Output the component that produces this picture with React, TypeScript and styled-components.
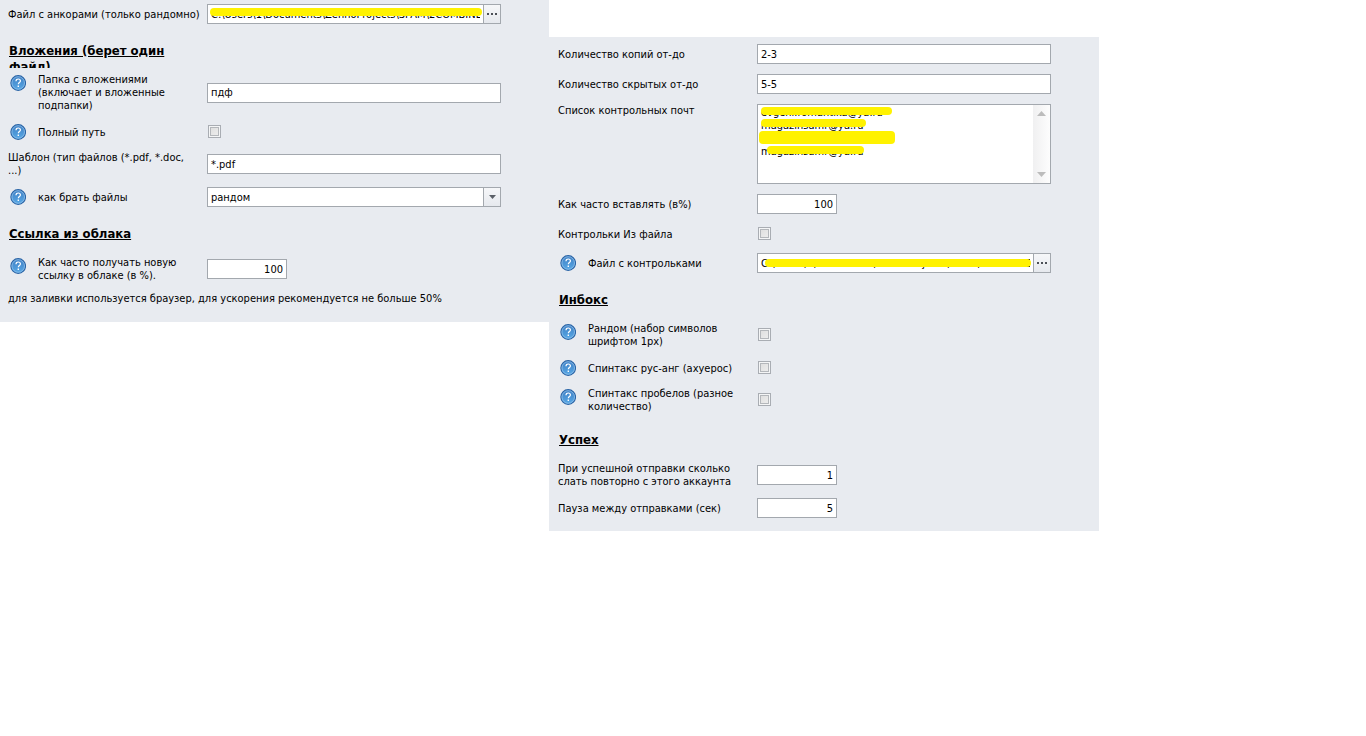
import React, { useId } from 'react';
import styled, { createGlobalStyle } from 'styled-components';

const font = '"DejaVu Sans Condensed", "Noto Sans", sans-serif';
const edge = '#a3a8ae';

const GlobalStyle = createGlobalStyle`
  *, *::before, *::after { box-sizing: border-box; }
  body { margin: 0; background: #fff; color: #000; font: 11px/13px ${font}; }
  input, select, textarea, button { font: inherit; color: inherit; margin: 0; }
`;

const Page = styled.main`
  display: grid;
  grid-template-columns: 549fr 550fr 267fr;
  align-items: start;
`;

const Panel = styled.section<{ $lead: number; $inset: number; $end: number; $drop?: number }>`
  background: #e8ebf0;
  margin-top: ${(p) => p.$drop ?? 0}px;
  padding: ${(p) => p.$lead}px 48px ${(p) => p.$end}px ${(p) => p.$inset}px;
  min-width: 0;
`;

const Heading = styled.h2`
  margin: 19px 0 5px;
  padding-left: 1px;
  height: 25px;
  overflow: hidden;
  font-size: 13px;
  line-height: 16px;
  font-weight: bold;
  text-decoration: underline;
  white-space: pre-line;
`;

const RowGrid = styled.div<{ $gap: number }>`
  display: grid;
  grid-template-columns: 199px minmax(0, 294px);
  align-items: center;
  min-height: 20px;
  margin-top: ${(p) => p.$gap}px;
`;

const LabelCell = styled.div<{ $top?: boolean }>`
  display: flex;
  align-self: ${(p) => (p.$top ? 'start' : 'stretch')};
  align-items: center;
  white-space: pre-line;
`;

const HelpButton = styled.button`
  align-self: flex-start;
  flex: none;
  width: 16px;
  height: 16px;
  margin: 2px 12px 0 2px;
  padding: 0;
  border: 0;
  background: none;
  svg { display: block; }
`;

const Note = styled.p`
  margin: 10px 0 0;
`;

const TextBox = styled.input`
  display: block;
  width: 100%;
  height: 20px;
  padding: 0 3px;
  border: 1px solid ${edge};
  border-radius: 0;
  background: #fff;
  outline: 0;
`;

const NumberBox = styled(TextBox)`
  width: 80px;
  text-align: right;
`;

const Check = styled.input`
  appearance: none;
  display: block;
  width: 13px;
  height: 13px;
  margin: 0 0 1px 1px;
  border: 1px solid #a9adb3;
  background: linear-gradient(135deg, #dcdcdc, #f0f0f0);
  box-shadow: inset 0 0 0 1px #f4f5f6, inset 0 0 0 2px #b4b7bb;
  &:checked { background: #4a6f9c; }
`;

const Frame = styled.div`
  position: relative;
  display: flex;
  border: 1px solid ${edge};
  background: #fff;
`;

const FrameInput = styled.input`
  flex: 1;
  min-width: 0;
  height: 18px;
  padding: 0 3px;
  border: 0;
  background: none;
  outline: 0;
`;

const SideButton = styled.button`
  display: flex;
  align-items: center;
  justify-content: center;
  width: 17px;
  height: 18px;
  padding: 0;
  border: 0;
  border-left: 1px solid ${edge};
  background: linear-gradient(#f6f7f9, #e6e9ee);
`;

const Picker = styled.select`
  appearance: none;
  flex: 1;
  min-width: 0;
  height: 18px;
  padding: 0 20px 0 3px;
  border: 0;
  border-radius: 0;
  background: none;
  outline: 0;
`;

const PickerArrow = styled.span`
  position: absolute;
  inset: 0 0 0 auto;
  display: flex;
  align-items: center;
  justify-content: center;
  width: 17px;
  border-left: 1px solid ${edge};
  background: linear-gradient(#f6f7f9, #e6e9ee);
  pointer-events: none;
`;

const Area = styled.textarea`
  flex: 1;
  min-width: 0;
  height: 78px;
  padding: 1px 3px;
  border: 0;
  background: none;
  outline: 0;
  overflow: hidden;
  resize: none;
  white-space: pre;
`;

const Rail = styled.div`
  display: flex;
  flex-direction: column;
  align-items: center;
  justify-content: space-between;
  width: 17px;
  padding: 6px 0;
  background: linear-gradient(90deg, #f0f0f1, #fdfdfd);
  svg { display: block; }
`;

const Marker = styled.span<{ $x: number; $y: number; $w?: number; $right?: number; $h?: number }>`
  position: absolute;
  left: ${(p) => p.$x}px;
  top: ${(p) => p.$y}px;
  height: ${(p) => p.$h ?? 8}px;
  ${(p) => (p.$right === undefined ? `width: ${p.$w}px;` : `right: ${p.$right}px;`)}
  border-radius: 4px;
  background: #fff200;
  pointer-events: none;
`;

function HelpIcon() {
  return (
    <svg width="16" height="16" viewBox="0 0 16 16" aria-hidden="true">
      <defs>
        <linearGradient id="help-fill" x1="0" y1="0" x2="0" y2="1">
          <stop offset="0" stopColor="#3f7fc4" />
          <stop offset="1" stopColor="#58a9e6" />
        </linearGradient>
      </defs>
      <circle cx="8.200" cy="8" r="7.300" fill="url(#help-fill)" stroke="#2a64a6" strokeWidth="1.200" />
      <circle cx="8.200" cy="8" r="6.300" fill="none" stroke="#9cc8ee" strokeWidth="0.700" />
      <path d="M6 6.200C6 4.700 6.900 4 8.200 4s2.200.8 2.200 1.900c0 1.600-2.100 1.700-2.100 3.400" fill="none" stroke="#fff" strokeWidth="1.200" />
      <rect x="7.600" y="10.500" width="1.400" height="1.500" fill="#fff" />
    </svg>
  );
}

function Dots() {
  return (
    <svg width="10" height="2" viewBox="0 0 10 2" aria-hidden="true" fill="#4c5057">
      <rect x="0" width="2" height="2" />
      <rect x="4" width="2" height="2" />
      <rect x="8" width="2" height="2" />
    </svg>
  );
}

type RowProps = {
  label: string;
  help?: boolean;
  gap?: number;
  top?: boolean;
  children: (id: string) => React.ReactNode;
};

function Row({ label, help, gap = 10, top, children }: RowProps) {
  const id = useId();
  return (
    <RowGrid $gap={gap}>
      <LabelCell $top={top}>
        {help && (
          <HelpButton type="button" aria-label="Справка">
            <HelpIcon />
          </HelpButton>
        )}
        <label htmlFor={id}>{label}</label>
      </LabelCell>
      <div>{children(id)}</div>
    </RowGrid>
  );
}

const mails = ['evgeni.romantika@ya.ru', 'magazinsamr@ya.ru', '', 'magazinsamr@ya.ru'].join('\n');

export default function App() {
  return (
    <>
      <GlobalStyle />
      <Page>
        <Panel $lead={4} $inset={8} $end={17}>
          <Row label="Файл с анкорами (только рандомно)" gap={0}>
            {(id) => (
              <Frame>
                <FrameInput id={id} defaultValue="C:\Users\1\Documents\ZennoProjects\SPAM\2COMBINE" />
                <Marker $x={2} $y={3} $right={18} />
                <SideButton type="button" aria-label="Выбрать файл"><Dots /></SideButton>
              </Frame>
            )}
          </Row>

          <Heading>{'Вложения (берет один\nфайл)'}</Heading>
          <Row label={'Папка с вложениями\n(включает и вложенные\nподпапки)'} help gap={0}>
            {(id) => <TextBox id={id} defaultValue="пдф" />}
          </Row>
          <Row label="Полный путь" help>
            {(id) => <Check id={id} type="checkbox" />}
          </Row>
          <Row label={'Шаблон (тип файлов (*.pdf, *.doc,\n...)'} gap={9}>
            {(id) => <TextBox id={id} defaultValue="*.pdf" />}
          </Row>
          <Row label="как брать файлы" help>
            {(id) => (
              <Frame>
                <Picker id={id} defaultValue="рандом">
                  <option>рандом</option>
                </Picker>
                <PickerArrow>
                  <svg width="7" height="4" viewBox="0 0 7 4" aria-hidden="true"><path d="M0 0h7L3.500 4z" fill="#5b6068" /></svg>
                </PickerArrow>
              </Frame>
            )}
          </Row>

          <Heading>Ссылка из облака</Heading>
          <Row label={'Как часто получать новую\nссылку в облаке (в %).'} help gap={0}>
            {(id) => <NumberBox id={id} inputMode="numeric" defaultValue="100" />}
          </Row>
          <Note>для заливки используется браузер, для ускорения рекомендуется не больше 50%</Note>
        </Panel>

        <Panel $lead={7} $inset={9} $end={13} $drop={37}>
          <Row label="Количество копий от-до" gap={0}>
            {(id) => <TextBox id={id} defaultValue="2-3" />}
          </Row>
          <Row label="Количество скрытых от-до">
            {(id) => <TextBox id={id} defaultValue="5-5" />}
          </Row>
          <Row label="Список контрольных почт" top>
            {(id) => (
              <Frame>
                <Area id={id} defaultValue={mails} />
                <Marker $x={3} $y={2} $w={131} />
                <Marker $x={3} $y={14} $w={105} />
                <Marker $x={1} $y={26} $w={136} $h={13} />
                <Marker $x={9} $y={41} $w={97} />
                <Rail>
                  <svg width="9" height="5" viewBox="0 0 9 5" aria-hidden="true"><path d="M4.500 0L9 5H0z" fill="#bcbcbc" /></svg>
                  <svg width="9" height="5" viewBox="0 0 9 5" aria-hidden="true"><path d="M0 0h9L4.500 5z" fill="#bcbcbc" /></svg>
                </Rail>
              </Frame>
            )}
          </Row>
          <Row label="Как часто вставлять (в%)">
            {(id) => <NumberBox id={id} inputMode="numeric" defaultValue="100" />}
          </Row>
          <Row label="Контрольки Из файла">
            {(id) => <Check id={id} type="checkbox" />}
          </Row>
          <Row label="Файл с контрольками" help gap={9}>
            {(id) => (
              <Frame>
                <FrameInput id={id} defaultValue="C:\Users\1\Documents\ZennoProjects\SPAM\COMBINES\" />
                <Marker $x={7} $y={5} $right={19} />
                <SideButton type="button" aria-label="Выбрать файл"><Dots /></SideButton>
              </Frame>
            )}
          </Row>

          <Heading>Инбокс</Heading>
          <Row label={'Рандом (набор символов\nшрифтом 1px)'} help gap={0}>
            {(id) => <Check id={id} type="checkbox" />}
          </Row>
          <Row label="Спинтакс рус-анг (ахуерос)" help>
            {(id) => <Check id={id} type="checkbox" />}
          </Row>
          <Row label={'Спинтакс пробелов (разное\nколичество)'} help gap={9}>
            {(id) => <Check id={id} type="checkbox" />}
          </Row>

          <Heading>Успех</Heading>
          <Row label={'При успешной отправки сколько\nслать повторно с этого аккаунта'} gap={0}>
            {(id) => <NumberBox id={id} inputMode="numeric" defaultValue="1" />}
          </Row>
          <Row label="Пауза между отправками (сек)">
            {(id) => <NumberBox id={id} inputMode="numeric" defaultValue="5" />}
          </Row>
        </Panel>
      </Page>
    </>
  );
}
